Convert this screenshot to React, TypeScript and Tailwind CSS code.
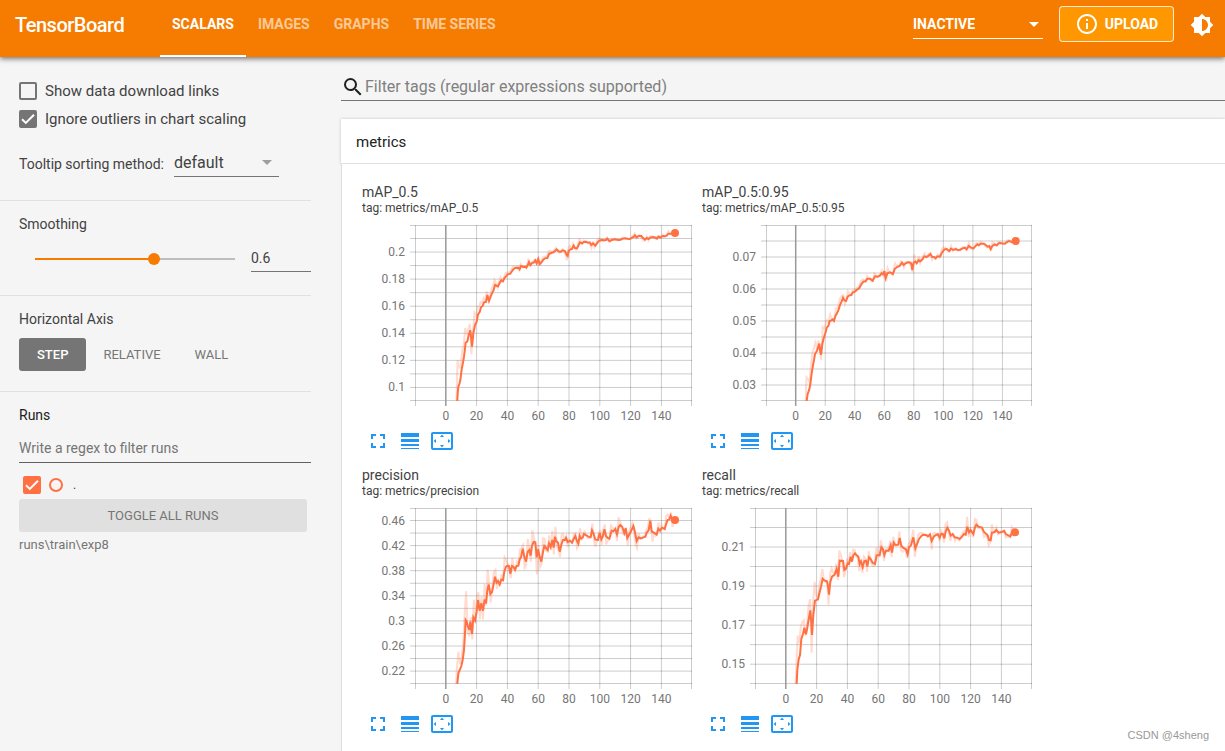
import { useId, useState } from 'react';
import {
  MdBrightness6,
  MdFullscreen,
  MdInfoOutline,
  MdLineWeight,
  MdSearch,
  MdSettingsOverscan,
} from 'react-icons/md';

type Point = [number, number];

type Chart = {
  name: string;
  left: number;
  zero: number;
  xStep: number;
  yFirst: number;
  yStep: number;
  yLabels: string[];
  // rows of the grid between two labels, and the row of the first label
  labelEvery: number;
  labelStart: number;
  curve: string;
};

const PLOT_RIGHT = 330;
const PLOT_BOTTOM = 176;

// curves are kept at three units per pixel, measured from the plot's top left
const CHARTS: Chart[] = [
  {
    name: 'mAP_0.5',
    left: 53,
    zero: 83.8,
    xStep: 30.8,
    yFirst: 13.5,
    yStep: 13.54,
    yLabels: ['0.2', '0.18', '0.16', '0.14', '0.12', '0.1'],
    labelEvery: 2,
    labelStart: 1,
    curve:
      '282,585 286,527 287,505 289,485 292,477 295,465 299,433 303,413 306,395 309,370 311,353 316,349 320,330 325,316 327,335 330,365 334,325 339,300 344,290 348,268 353,261 357,247 362,243 366,232 372,231 376,210 381,228 385,217 390,205 395,195 399,180 408,184 414,172 418,166 423,169 427,160 432,154 437,148 445,146 450,138 455,132 460,129 469,128 473,133 477,123 484,126 489,125 493,128 497,121 501,111 505,120 510,114 516,112 520,106 524,115 529,102 533,117 539,111 544,104 549,100 556,99 561,87 567,84 574,82 580,77 584,73 590,79 597,80 602,76 609,78 614,90 617,93 620,78 625,73 630,72 635,62 639,69 645,70 650,60 654,52 660,55 666,51 672,50 678,53 683,52 688,60 693,55 700,62 707,52 712,47 719,45 727,46 732,45 736,41 742,48 750,45 759,43 769,45 776,44 782,41 789,40 796,41 804,42 811,38 816,35 819,31 824,37 830,33 838,33 844,40 849,44 854,39 860,42 866,37 874,36 881,38 885,41 889,35 896,37 902,33 909,34 914,32 919,26 929,26 939,24',
  },
  {
    name: 'mAP_0.5:0.95',
    left: 64,
    zero: 93.7,
    xStep: 29.53,
    yFirst: 16,
    yStep: 16,
    yLabels: ['0.07', '0.06', '0.05', '0.04', '0.03'],
    labelEvery: 2,
    labelStart: 1,
    curve:
      '309,585 314,527 317,507 322,493 325,477 329,445 333,420 336,405 339,387 345,377 350,362 352,356 354,375 357,389 361,357 365,340 370,325 374,308 379,303 383,288 388,286 392,283 396,288 401,271 405,265 410,253 414,240 419,229 423,218 427,226 432,228 437,215 442,211 448,210 453,202 459,200 464,195 472,189 478,178 484,170 491,169 496,161 504,161 512,167 519,154 527,155 534,152 539,145 544,148 547,138 551,159 556,145 564,142 573,147 578,132 585,126 593,123 600,113 605,120 611,115 618,112 626,113 629,121 631,135 635,113 640,110 644,115 650,105 654,109 661,104 667,94 674,96 680,92 685,87 691,96 696,96 701,100 706,94 714,95 720,83 727,73 734,72 742,78 747,71 754,75 761,72 768,75 775,74 782,70 789,68 794,73 800,63 806,67 814,70 820,64 826,58 830,61 836,56 846,56 851,60 857,65 862,63 866,72 871,63 878,58 884,61 892,54 899,55 909,56 914,52 921,48 930,51 941,48',
  },
  {
    name: 'precision',
    left: 53,
    zero: 83.8,
    xStep: 30.8,
    yFirst: 12.5,
    yStep: 12.55,
    yLabels: ['0.46', '0.42', '0.38', '0.34', '0.3', '0.26', '0.22'],
    labelEvery: 2,
    labelStart: 0,
    curve:
      '280,576 286,527 289,496 294,484 298,474 302,456 306,426 309,376 311,336 314,341 318,356 322,366 325,341 330,378 334,328 339,338 344,311 348,276 353,308 358,286 363,308 368,274 372,286 376,248 380,229 385,258 390,252 395,229 399,206 404,224 408,219 413,229 418,215 423,217 427,191 432,176 437,173 441,174 445,197 450,174 455,177 459,185 464,174 469,173 473,154 477,148 482,122 487,146 492,161 497,132 502,126 506,143 510,113 515,102 520,103 524,148 528,124 533,146 538,161 543,132 547,114 552,120 557,126 561,106 566,117 571,96 575,119 579,86 583,100 588,104 593,131 598,110 603,96 609,96 612,90 617,102 624,98 630,104 635,93 640,84 645,99 649,107 653,84 657,92 662,89 666,78 672,81 679,86 686,88 690,67 695,78 700,95 708,96 713,75 718,94 723,84 727,64 732,84 737,90 742,92 749,68 754,70 760,63 765,79 770,57 775,51 781,57 787,75 791,60 796,90 801,81 807,70 814,54 819,73 824,99 830,88 837,91 844,88 850,86 854,75 860,66 865,38 869,70 876,74 884,80 889,62 894,68 900,59 908,63 913,46 917,36 922,34 926,23 931,38 939,36',
  },
  {
    name: 'recall',
    left: 53,
    zero: 83.8,
    xStep: 30.8,
    yFirst: 19.5,
    yStep: 19.53,
    yLabels: ['0.21', '0.19', '0.17', '0.15'],
    labelEvery: 2,
    labelStart: 1,
    curve:
      '278,576 284,527 286,486 290,454 294,441 298,393 303,378 307,359 312,379 316,359 320,334 325,307 328,346 330,381 334,321 339,278 348,274 353,252 357,236 362,212 367,217 375,220 378,234 381,260 385,221 390,206 398,200 404,183 409,206 413,158 423,159 427,186 432,182 437,166 441,168 446,146 450,161 454,142 459,136 464,142 469,146 473,168 477,160 482,177 487,159 492,158 496,175 501,148 506,153 512,164 519,168 524,142 533,142 538,118 543,124 547,141 552,128 560,128 566,112 570,134 575,104 580,111 589,110 593,90 598,113 604,120 612,124 617,139 621,118 627,112 634,88 640,121 646,106 651,93 657,85 663,80 673,81 678,85 684,79 689,99 696,85 702,81 708,79 713,89 718,77 723,78 727,91 731,71 736,59 741,68 746,83 752,78 758,88 766,89 773,93 780,86 786,78 791,80 796,56 801,73 806,66 814,78 819,58 823,50 830,56 840,59 846,72 852,77 857,82 861,96 866,97 870,74 878,72 883,66 890,74 899,72 907,69 912,79 919,82 925,85 930,73 939,73',
  },
];

function parseCurve(curve: string): Point[] {
  return curve.split(' ').map((pair) => {
    const [x, y] = pair.split(',');
    return [Number(x) / 3, Number(y) / 3];
  });
}

// undo the 0.6 exponential smoothing, one sample per step
function unsmooth(points: Point[], stepWidth: number): Point[] {
  const samples: Point[] = [];
  let i = 0;
  for (let x = points[0][0]; x <= points[points.length - 1][0]; x += stepWidth) {
    while (points[i + 1][0] < x) i++;
    const [x0, y0] = points[i];
    const [x1, y1] = points[i + 1];
    samples.push([x, y0 + ((y1 - y0) * (x - x0)) / (x1 - x0)]);
  }
  return samples.map(([x, y], n) => (n === 0 ? [x, y] : [x, y + 1.5 * (y - samples[n - 1][1])]));
}

const toPoints = (points: Point[]) => points.map((p) => p.join(',')).join(' ');

export default function App() {
  return (
    <div className="relative flex h-screen flex-col overflow-hidden bg-[#f5f5f5] font-['Roboto','Liberation_Sans',sans-serif] text-[#424242]">
      <Header />
      <div className="flex min-h-0 flex-1">
        <Sidebar />
        <Dashboard />
      </div>
      <p className="absolute right-4 bottom-2 font-['Liberation_Sans',sans-serif] text-[11px] text-[#999]">CSDN @4sheng</p>
    </div>
  );
}

function Header() {
  return (
    <header className="relative z-10 flex h-[57px] shrink-0 items-start bg-[#f57c00] text-white shadow-[0_2px_5px_rgba(0,0,0,0.5)]">
      <h1 className="w-[160px] pl-[15px] text-xl leading-[50px] font-medium tracking-tight">TensorBoard</h1>
      <nav className="flex h-full text-sm font-bold">
        <a href="#scalars" className="h-full border-b-2 border-white px-3 leading-[48px]">SCALARS</a>
        <a href="#images" className="px-3 leading-[48px] text-white/60">IMAGES</a>
        <a href="#graphs" className="px-3 leading-[48px] text-white/60">GRAPHS</a>
        <a href="#timeseries" className="px-3 leading-[48px] text-white/60">TIME SERIES</a>
      </nav>
      <div className="ml-auto flex items-start gap-4 pt-[6px] pr-[11px]">
        <div className="relative">
          <select aria-label="Inactive plugins" className="h-[33px] w-[130px] appearance-none border-b border-white bg-transparent pt-[3px] text-sm font-bold outline-none" defaultValue="INACTIVE">
            <option>INACTIVE</option>
          </select>
          <Caret className="absolute top-4 right-1 text-white" />
        </div>
        <button className="flex h-9 w-[115px] items-center justify-center gap-[6px] rounded-sm border border-white/80 bg-[#ff9800] text-sm font-bold">
          <MdInfoOutline size={24} />
          UPLOAD
        </button>
        <button aria-label="Toggle dark mode" className="pt-[7px]">
          <MdBrightness6 size={24} />
        </button>
      </div>
    </header>
  );
}

function Sidebar() {
  const [showLinks, setShowLinks] = useState(false);
  const [ignoreOutliers, setIgnoreOutliers] = useState(true);
  const [smoothing, setSmoothing] = useState(0.6);
  const [runVisible, setRunVisible] = useState(true);

  return (
    <aside className="w-[341px] shrink-0 pr-[30px] text-sm">
      <section className="border-b border-[#e0e0e0] pt-[25px] pb-[23px] pl-[19px]">
        <Checkbox label="Show data download links" checked={showLinks} onChange={setShowLinks} />
        <div className="h-[10px]" />
        <Checkbox label="Ignore outliers in chart scaling" checked={ignoreOutliers} onChange={setIgnoreOutliers} />
        <div className="mt-5 flex items-center gap-[10px]">
          <label htmlFor="sorting" className="pt-0.5">Tooltip sorting method:</label>
          <div className="relative">
            <select id="sorting" className="h-[29px] w-[105px] appearance-none border-b border-[#757575] bg-transparent pt-0.5 text-base text-[#424242] outline-none" defaultValue="default">
              <option>default</option>
            </select>
            <Caret className="absolute top-3 right-[7px] text-[#9e9e9e]" />
          </div>
        </div>
      </section>

      <section className="border-b border-[#e0e0e0] pt-[13px] pb-[23px] pl-[19px]">
        <label htmlFor="smoothing" className="block leading-5">Smoothing</label>
        <div className="mt-2 flex items-center gap-4 pl-4">
          <input
            id="smoothing"
            type="range"
            min={0}
            max={1}
            step={0.01}
            value={smoothing}
            onChange={(e) => setSmoothing(Number(e.target.value))}
            className="mt-1 h-[2px] min-w-0 flex-1 appearance-none [&::-webkit-slider-thumb]:size-3 [&::-webkit-slider-thumb]:appearance-none [&::-webkit-slider-thumb]:rounded-full [&::-webkit-slider-thumb]:bg-[#f57c00]"
            style={{ background: `linear-gradient(to right, #f57c00 ${smoothing * 100}%, #bdbdbd ${smoothing * 100}%)` }}
          />
          <input
            aria-label="Smoothing value"
            value={smoothing}
            onChange={(e) => setSmoothing(Number(e.target.value) || 0)}
            className="h-[30px] w-[60px] border-b border-[#757575] bg-transparent pt-0.5 outline-none"
          />
        </div>
      </section>

      <section className="border-b border-[#e0e0e0] pt-[13px] pb-5 pl-[19px]">
        <h2 className="leading-5">Horizontal Axis</h2>
        <div className="mt-[9px] flex text-[13px] text-[#757575]">
          <button className="h-[33px] rounded-[3px] bg-[#757575] px-[18px] pt-0.5 font-medium text-white">STEP</button>
          <button className="h-[33px] px-[17px] pt-0.5">RELATIVE</button>
          <button className="h-[33px] px-[17px] pt-0.5">WALL</button>
        </div>
      </section>

      <section className="pt-[13px] pl-[19px]">
        <h2 className="leading-5 text-[#212121]">Runs</h2>
        <input
          aria-label="Filter runs"
          placeholder="Write a regex to filter runs"
          className="mt-2 h-[30px] w-full border-b border-[#616161] bg-transparent outline-none placeholder:text-[#757575]"
        />
        <div className="mt-[13px] flex items-center gap-2 pl-1">
          <label>
            <input
              type="checkbox"
              aria-label="Show run"
              checked={runVisible}
              onChange={(e) => setRunVisible(e.target.checked)}
              className="sr-only"
            />
            <CheckBoxFace checked={runVisible} className={runVisible ? 'border-[#ff7043] bg-[#ff7043]' : 'border-[#ff7043]'} />
          </label>
          <button aria-label="Isolate run" className="size-[14px] rounded-full border-2 border-[#ff7043]" />
          <span className="pl-0.5 text-xs leading-4">.</span>
        </div>
        <button className="mt-[5px] block h-[33px] w-72 rounded-[3px] bg-[#e0e0e0] pt-0.5 text-[13px] text-[#757575]">TOGGLE ALL RUNS</button>
        <p className="mt-[5px] text-[13px] leading-4 text-[#757575]">runs\train\exp8</p>
      </section>
    </aside>
  );
}

function Checkbox({ label, checked, onChange }: { label: string; checked: boolean; onChange: (v: boolean) => void }) {
  return (
    <label className="flex h-[18px] items-center gap-2 text-[15px]">
      <input type="checkbox" className="sr-only" checked={checked} onChange={(e) => onChange(e.target.checked)} />
      <CheckBoxFace checked={checked} className={checked ? 'border-[#757575] bg-[#757575]' : 'border-[#757575]'} />
      <span className="pt-0.5">{label}</span>
    </label>
  );
}

function CheckBoxFace({ checked, className }: { checked: boolean; className: string }) {
  return (
    <span className={`flex size-[18px] items-center justify-center rounded-[2px] border-2 ${className}`}>
      {checked && (
        <svg width="14" height="14" viewBox="0 0 14 14" fill="none" stroke="white" strokeWidth="2">
          <path d="M1 7.2l3.8 3.7L13 2.7" />
        </svg>
      )}
    </span>
  );
}

function Caret({ className }: { className: string }) {
  return (
    <svg width="10" height="5" viewBox="0 0 10 5" className={`pointer-events-none ${className}`}>
      <path d="M0 0h10L5 5z" fill="currentColor" />
    </svg>
  );
}

function Dashboard() {
  return (
    <main className="flex min-w-0 flex-1 flex-col">
      <label className="mt-4 flex h-7 shrink-0 items-center border-b border-[#757575]">
        <MdSearch size={24} className="shrink-0 text-[#212121]" />
        <input
          aria-label="Filter tags"
          placeholder="Filter tags (regular expressions supported)"
          className="min-w-0 flex-1 bg-transparent text-base outline-none placeholder:text-[#808080]"
        />
      </label>
      <button className="mt-[18px] h-[45px] shrink-0 border-b border-[#e0e0e0] bg-white pt-0.5 pl-[15px] text-left text-[15px] text-[#212121] shadow-[0_0_3px_rgba(0,0,0,0.2)]">
        metrics
      </button>
      <div className="flex flex-1 flex-wrap content-start gap-x-[10px] gap-y-[14px] border-l border-[#ddd] bg-white pt-5 pl-5">
        {CHARTS.map((chart) => (
          <ChartCard key={chart.name} chart={chart} />
        ))}
      </div>
    </main>
  );
}

function ChartCard({ chart }: { chart: Chart }) {
  return (
    <article className="w-[330px]">
      <h3 className="text-sm leading-4">{chart.name}</h3>
      <p className="text-xs leading-4">tag: metrics/{chart.name}</p>
      <ScalarPlot chart={chart} />
      <div className="mt-1 flex gap-2 pl-1 text-[#2196f3]">
        <button aria-label="Toggle fullscreen"><MdFullscreen size={24} /></button>
        <button aria-label="Toggle y-axis log scale"><MdLineWeight size={24} /></button>
        <button aria-label="Fit domain to data"><MdSettingsOverscan size={24} /></button>
      </div>
    </article>
  );
}

function ScalarPlot({ chart }: { chart: Chart }) {
  const clipId = useId();
  const smooth = parseCurve(chart.curve);
  const raw = unsmooth(smooth, chart.xStep / 20);
  const [endX, endY] = smooth[smooth.length - 1];

  const rows: number[] = [];
  for (let y = chart.yFirst; y < PLOT_BOTTOM - 4; y += chart.yStep) rows.push(y);
  const columns = [1, 2, 3, 4, 5, 6, 7].map((n) => chart.zero + n * chart.xStep);

  return (
    <svg width="330" height="200" className="mt-[9px] block overflow-visible text-xs" fill="none">
      <clipPath id={clipId}>
        <rect x={chart.left} width={PLOT_RIGHT - chart.left} height={PLOT_BOTTOM} />
      </clipPath>
      <g stroke="#000" strokeOpacity="0.2">
        {[0.5, ...rows, PLOT_BOTTOM - 0.5].map((y) => (
          <path key={y} d={`M${chart.left - 5} ${y}H${PLOT_RIGHT}`} />
        ))}
        {[chart.left + 0.5, ...columns, PLOT_RIGHT - 0.5].map((x) => (
          <path key={x} d={`M${x} 0V181`} />
        ))}
      </g>
      <path d={`M${chart.zero} 0V181`} stroke="#999" strokeWidth="1.5" />
      <g clipPath={`url(#${clipId})`} stroke="#ff7043" strokeWidth="2">
        <polyline points={toPoints(raw)} strokeOpacity="0.25" />
        <polyline points={toPoints(smooth)} />
      </g>
      <circle cx={endX} cy={endY} r="4" fill="#ff7043" />
      <g fill="#757575">
        {chart.yLabels.map((label, n) => (
          <text key={label} x={chart.left - 10} y={chart.yFirst + (chart.labelStart + n * chart.labelEvery) * chart.yStep + 4} textAnchor="end">
            {label}
          </text>
        ))}
        {[chart.zero, ...columns].map((x, n) => (
          <text key={x} x={x} y={195} textAnchor="middle">
            {n * 20}
          </text>
        ))}
      </g>
    </svg>
  );
}
